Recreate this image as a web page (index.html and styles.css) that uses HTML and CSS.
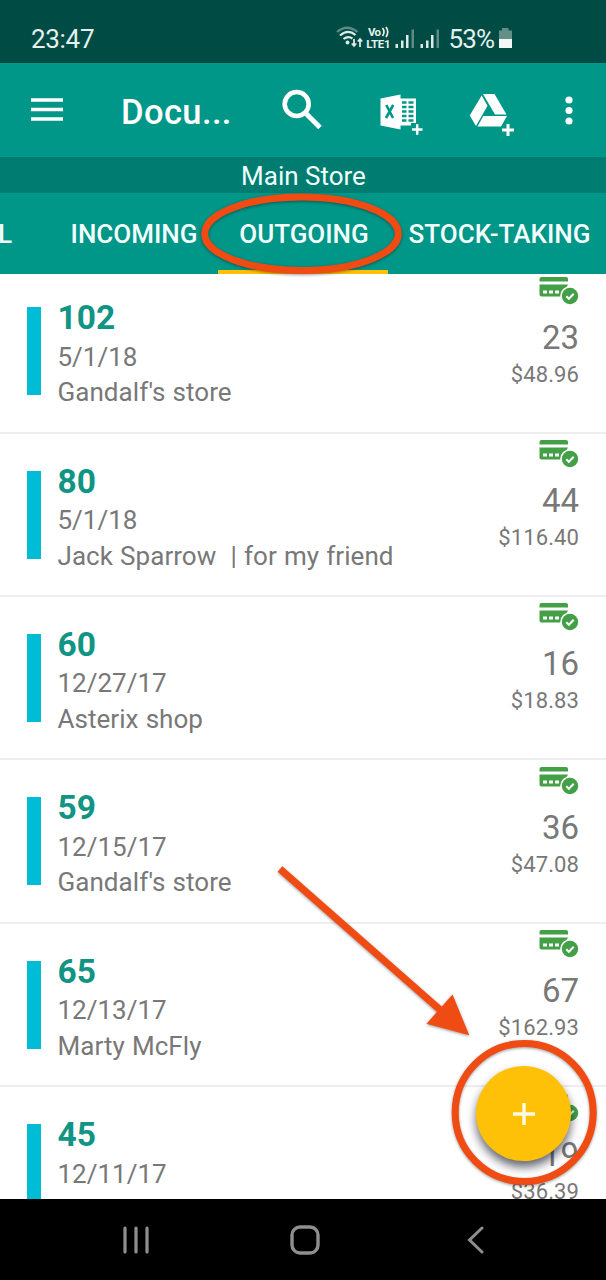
FILE: index.html
```
<!DOCTYPE html>
<html lang="en">
<head>
  <meta charset="UTF-8" />
  <meta name="viewport" content="width=device-width, initial-scale=1" />
  <title>Documents - Main Store</title>
  <link rel="stylesheet" href="styles.css">
</head>
<body>

  <svg class="defs" width="0" height="0">
    <symbol id="paid" viewBox="0 0 40 29">
      <path d="M2.500 1h24.500q2 0 2 2v2.500H.5V3q0-2 2-2z" />
      <path d="M.5 8.500h28.500l-6.500 12H2.500q-2 0-2-2z" />
      <path d="M4 16h4M10 16h4M16 16h4" stroke="#fff" stroke-width="2.800" />
      <circle cx="31" cy="20" r="9.800" fill="#fff" />
      <circle cx="31" cy="20" r="8.200" />
      <path d="M27.300 20.200l2.600 2.600 4.800-5" fill="none" stroke="#fff" stroke-width="2" />
    </symbol>
  </svg>

  <div class="status-bar">
    <span class="time">23:47</span>
    <div class="status-icons">
      <svg width="176" height="28" viewBox="0 0 176 28">
        <g fill="none" stroke="#dcebe8" stroke-width="2.200">
          <path d="M1 10q10-8.500 20.500 0" stroke="#5d8a84" />
          <path d="M4 13.500q8-7 15.500-.5" />
          <path d="M7.500 17q4.500-3.500 9-.5" />
          <path d="M18 17v7M15.800 21.500l2.200 2.500 2.200-2.500M24 25v-8M21.800 19.500l2.200-2.500 2.200 2.500" stroke-width="1.800" />
        </g>
        <circle cx="11.500" cy="20.500" r="1.900" fill="#dcebe8" />
        <g class="volte">
          <text x="32" y="14" textLength="13">Vo</text>
          <text x="30.200" y="25.700" textLength="24.500">LTE1</text>
        </g>
        <path d="M46.500 6q3 4 0 8M50 5q3.500 5 0 10" fill="none" stroke="#e4f1ef" stroke-width="1.700" />
        <g fill="#dcebe8">
          <path d="M59.500 22H62v4h-2.500zM65 18.500h2.500V26H65zM70 13h2.500v13H70z" />
          <path d="M84.500 22H87v4h-2.500zM90 18.500h2.500V26H90zM95 13h2.500v13H95z" />
        </g>
        <path d="M75.500 7.500H78V26h-2.500zM100.500 7.500h2.500V26h-2.500z" fill="#5d8a84" />
        <text class="percent" x="112.500" y="26" textLength="46.500">53%</text>
        <path d="M163 8.500h3V6h6.500v2.500h3.500v10h-13z" fill="#648f89" />
        <path d="M163 17h13v9h-13z" fill="#f2f7f6" />
      </svg>
    </div>
  </div>

  <div class="app-bar">
    <svg class="menu" width="32" height="24" viewBox="0 0 32 24"><path d="M0 2h32M0 11.500h32M0 21h32" stroke="#fff" stroke-width="3.600" /></svg>
    <h1>Docu...</h1>
    <svg class="search" width="42" height="42" viewBox="0 0 42 42"><circle cx="14.700" cy="15" r="12" fill="none" stroke="#fff" stroke-width="4.600" /><path d="M23.500 24L38 38.500" stroke="#fff" stroke-width="5" /></svg>
    <svg class="excel" width="43" height="42" viewBox="0 0 43 42">
      <path d="M.5 4.500L20.500.5v35L.5 31.500z" fill="#fff" />
      <path d="M6.300 11l6.700 13M13.200 11L6 24" stroke="#009688" stroke-width="2.600" />
      <path d="M20 4.500h16V29h-5v2.500H20z" fill="#fff" />
      <path d="M22 8.500h4.500M22 13h4.500M22 17.500h4.500M22 22h4.500M22 26.500h4.500M28.500 8.500h5M28.500 13h5M28.500 17.500h5M28.500 22h5M28.500 26.500h5" stroke="#009688" stroke-width="2.500" />
      <path d="M32 35.500h10.500M37.200 30.300v10.500" stroke="#fff" stroke-width="2.500" />
    </svg>
    <svg class="drive" width="47" height="43" viewBox="0 0 47 43">
      <path d="M14 1h11.500l12 20.500H26z" fill="#fff" />
      <path d="M12.700 2.500l5.800 10.300L7 33 .7 22.500z" fill="#fff" />
      <path d="M14.300 23h23.700L32 33.500H8.500z" fill="#fff" />
      <path d="M33 37h12M39 31v12" stroke="#009688" stroke-width="6" />
      <path d="M33 37h12M39 31v12" stroke="#fff" stroke-width="3" />
    </svg>
    <svg class="more" width="8" height="30" viewBox="0 0 8 30" fill="#fff"><circle cx="4" cy="4" r="3.600" /><circle cx="4" cy="14.500" r="3.600" /><circle cx="4" cy="25" r="3.600" /></svg>
  </div>

  <div class="store">Main Store</div>

  <div class="tabs">
    <div class="tab tab-all">L</div>
    <div class="tab tab-incoming">INCOMING</div>
    <div class="tab tab-outgoing active">OUTGOING</div>
    <div class="tab tab-stock">STOCK-TAKING</div>
  </div>

  <main class="list">
    <div class="rows" id="rows"></div>
  </main>

  <div class="nav-bar">
    <svg width="28" height="28" viewBox="0 0 28 28"><path d="M3 2v24M14 2v24M25 2v24" stroke="#8f8f8f" stroke-width="3.200" stroke-linecap="round" /></svg>
    <svg class="home" width="30" height="30" viewBox="0 0 30 30"><rect x="2" y="2" width="26" height="26" rx="8" fill="none" stroke="#8f8f8f" stroke-width="3.400" /></svg>
    <svg width="18" height="28" viewBox="0 0 18 28"><path d="M15 2L2.500 14 15 26" fill="none" stroke="#8f8f8f" stroke-width="3" stroke-linecap="round" /></svg>
  </div>

  <button class="fab" aria-label="Add">
    <svg width="22" height="22" viewBox="0 0 22 22"><path d="M0 11h22M11 0v22" stroke="#fffbe6" stroke-width="3.400" /></svg>
  </button>

  <!-- tutorial marks -->
  <svg class="marks" width="606" height="1280" viewBox="0 0 606 1280">
    <g fill="none" stroke="#f04b12" stroke-width="7">
      <ellipse cx="301.500" cy="233.700" rx="96.800" ry="36.700" />
      <circle cx="524.200" cy="1112.500" r="69" />
      <path d="M280 869L442 1011.500" />
    </g>
    <path d="M452.500 994.500L469.300 1035.300 426.500 1023.700z" fill="#f04b12" />
  </svg>

  <script>
    const docs = [
      { no: '102', date: '5/1/18', name: "Gandalf's store", qty: 23, sum: '$48.96' },
      { no: '80', date: '5/1/18', name: 'Jack Sparrow  | for my friend', qty: 44, sum: '$116.40' },
      { no: '60', date: '12/27/17', name: 'Asterix shop', qty: 16, sum: '$18.83' },
      { no: '59', date: '12/15/17', name: "Gandalf's store", qty: 36, sum: '$47.08' },
      { no: '65', date: '12/13/17', name: 'Marty McFly', qty: 67, sum: '$162.93' },
      { no: '45', date: '12/11/17', name: '', qty: 19, sum: '$36.39' }
    ];

    document.getElementById('rows').innerHTML = docs.map(d => `
      <div class="row">
        <div class="stripe"></div>
        <div class="info">
          <div class="no">${d.no}</div>
          <div class="date">${d.date}</div>
          <div class="name">${d.name}</div>
        </div>
        <div class="totals">
          <svg class="paid" width="40" height="29"><use href="#paid" /></svg>
          <div class="qty">${d.qty}</div>
          <div class="sum">${d.sum}</div>
        </div>
      </div>
    `).join('');
  </script>
</body>
</html>
```
FILE: styles.css
```
* {
  box-sizing: border-box;
}

body {
  margin: 0;
  width: 606px;
  height: 1280px;
  position: relative;
  overflow: hidden;
  display: flex;
  flex-direction: column;
  font-family: Roboto, "Liberation Sans", sans-serif;
  background: #fff;
  color: #787878;
}

svg {
  display: block;
  flex: none;
}

.defs {
  position: absolute;
}

.status-bar {
  height: 63px;
  flex: none;
  background: #004b43;
  color: #e4f1ef;
  display: flex;
  justify-content: space-between;
  padding: 22px 94px 0 31px;
}

.time {
  font-size: 26px;
  line-height: 34px;
  letter-spacing: -0.3px;
}

.volte {
  fill: #e4f1ef;
  font-size: 11.5px;
  font-weight: 700;
}

.percent {
  fill: #e4f1ef;
  font-size: 26px;
}

.app-bar {
  height: 94px;
  flex: none;
  background: #009688;
  color: #fff;
  display: flex;
  align-items: flex-start;
  padding-left: 31px;
}

.menu {
  margin-top: 35px;
}

.app-bar h1 {
  margin: 29px 0 0 58px;
  width: 161px;
  font-size: 34.5px;
  line-height: 40px;
  font-weight: 500;
  letter-spacing: 0.4px;
}

.search {
  margin-top: 26px;
}

.excel {
  margin: 31px 0 0 56px;
}

.drive {
  margin: 30px 0 0 46px;
}

.more {
  margin: 33px 0 0 49px;
}

.store {
  height: 36px;
  flex: none;
  background: #007d70;
  color: #f0fffd;
  text-align: center;
  font-size: 26px;
  line-height: 38px;
  padding-left: 1px;
}

.tabs {
  height: 81px;
  flex: none;
  background: #009688;
  color: #f4fffd;
  display: flex;
  overflow: hidden;
  font-size: 26px;
  font-weight: 500;
  line-height: 83px;
}

.tab {
  flex: none;
  height: 81px;
  text-align: center;
  white-space: nowrap;
}

.tab-all {
  width: 50px;
  display: flex;
  justify-content: flex-end;
  padding-right: 38px;
}

.tab-incoming {
  width: 168px;
}

.tab-outgoing {
  width: 170px;
  padding-left: 2px;
}

.tab-stock {
  width: 222px;
  padding-left: 1px;
}

.active {
  border-bottom: 4px solid #ffc107;
}

.list {
  flex: 1;
  min-height: 0;
  overflow: hidden;
}

.rows {
  margin-top: -3.8px;
}

.row {
  height: 163.4px;
  border-bottom: 2px solid #eeeeee;
  display: flex;
  padding: 0 27px;
}

.stripe {
  width: 14px;
  height: 88px;
  margin-top: 37px;
  background: #00bcd4;
}

.info {
  flex: 1;
  padding: 29px 0 0 16.5px;
}

.no {
  color: #109484;
  font-size: 33.5px;
  line-height: 38px;
  font-weight: 700;
}

.date, .name {
  font-size: 26px;
  line-height: 35.5px;
  white-space: pre;
}

.date {
  margin-top: 2.5px;
}

.name {
  letter-spacing: 0.05px;
  word-spacing: 0.6px;
}

.totals {
  display: flex;
  flex-direction: column;
  align-items: flex-end;
  padding-top: 5.5px;
}

.paid {
  fill: #43a047;
}

.qty {
  margin-top: 13px;
  font-size: 33px;
  line-height: 40px;
}

.sum {
  margin-top: 3px;
  font-size: 22px;
  line-height: 28px;
  letter-spacing: 0.1px;
}

.nav-bar {
  height: 81px;
  flex: none;
  background: #000;
  display: flex;
  align-items: center;
  justify-content: space-between;
  padding: 0 121px 0 122px;
}

.home {
  margin-right: 7px;
}

.fab {
  position: absolute;
  left: 476px;
  top: 1066px;
  width: 95px;
  height: 95px;
  padding: 0;
  border: none;
  border-radius: 50%;
  background: #ffc107;
  display: flex;
  align-items: center;
  justify-content: center;
  box-shadow: 0 6px 10px rgba(20, 20, 40, 0.65);
}

.marks {
  position: absolute;
  left: 0;
  top: 0;
  pointer-events: none;
  filter: drop-shadow(0 1px 1.5px rgba(0, 0, 0, 0.4));
}
```
